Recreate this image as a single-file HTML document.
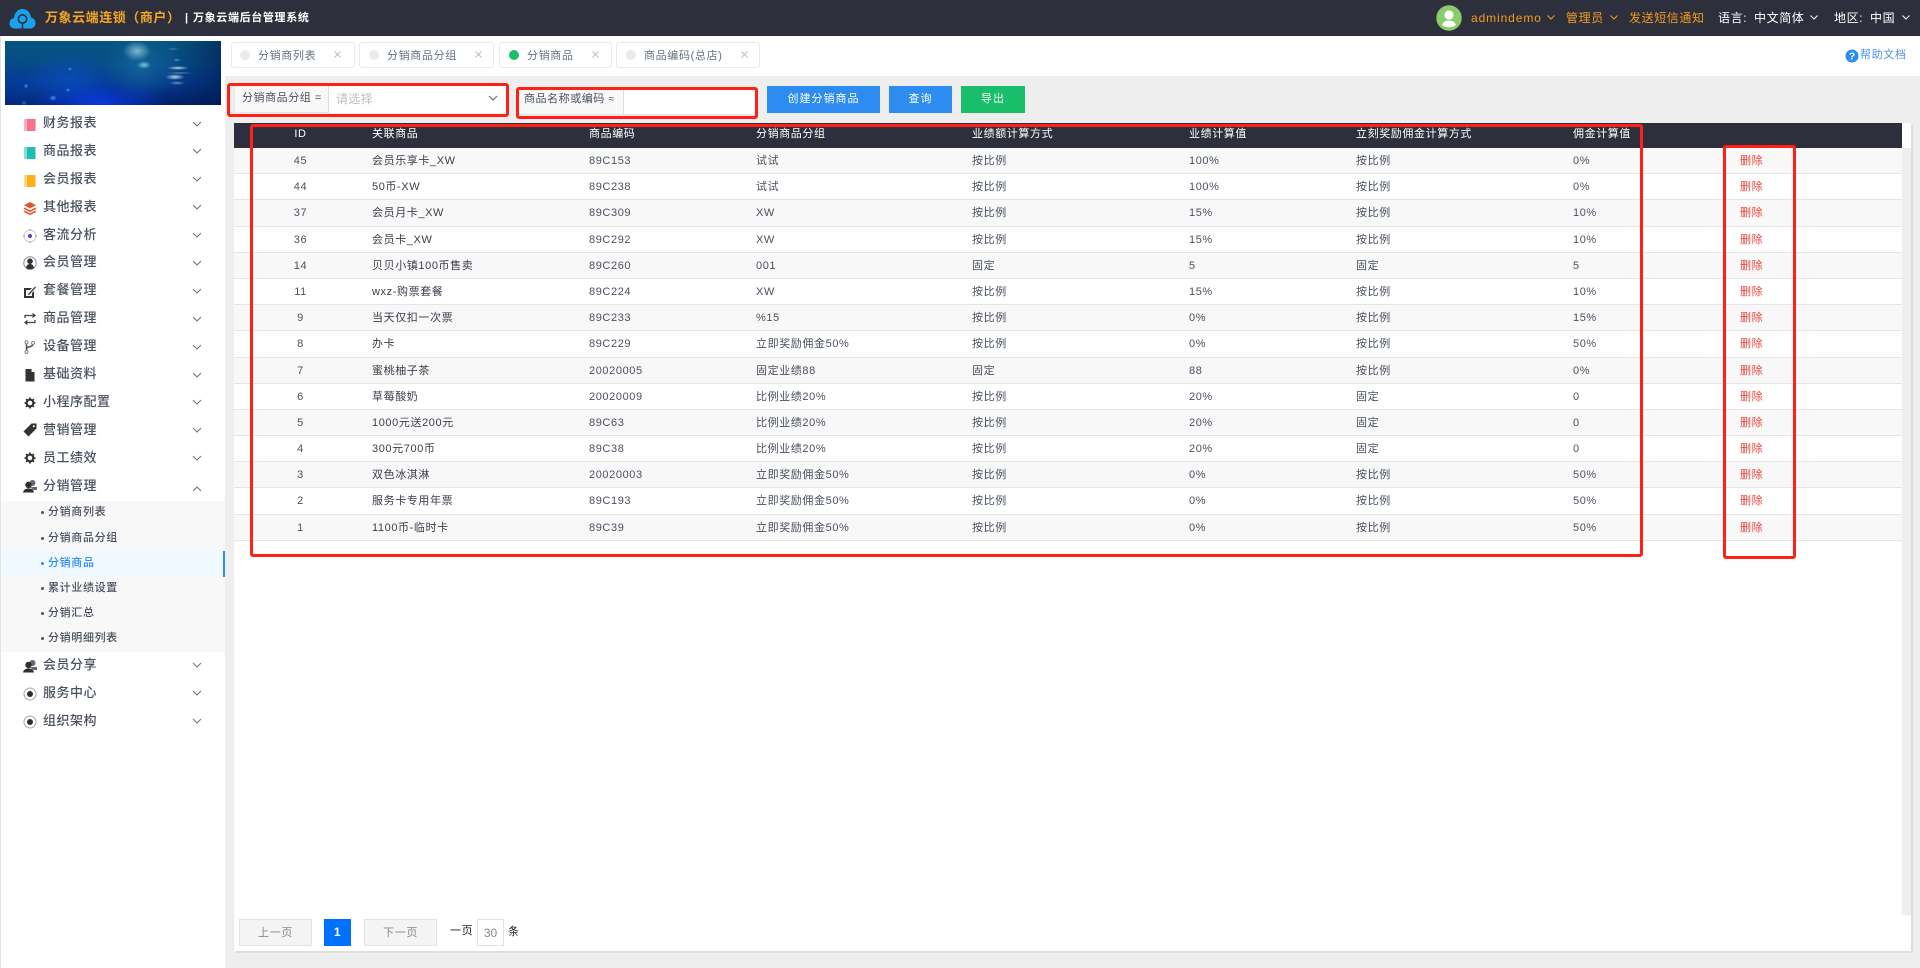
<!DOCTYPE html>
<html lang="zh-CN"><head><meta charset="utf-8"><title>分销商品</title>
<style>
*{box-sizing:border-box}
html,body{margin:0;padding:0;width:1920px;height:968px;overflow:hidden;background:#eee;font-family:"Liberation Sans","Noto Sans CJK SC",sans-serif;color:#495060}
.a{position:absolute;white-space:nowrap}
#top{position:absolute;left:0;top:0;width:1920px;height:36px;background:#2d303c}
#top .a{line-height:36px;top:0;height:36px}
.o{color:#f39c1f;font-size:12px;letter-spacing:.6px}
.w{color:#fff;font-size:12px;letter-spacing:.6px}
#side{position:absolute;left:0;top:36px;width:225px;height:932px;background:#fff;border-left:1px solid #e4e4e4}
#banner{position:absolute;left:5px;top:41px;width:216px;height:64px;background:
radial-gradient(ellipse 14px 10px at 132px 10px,rgba(170,225,235,.7),transparent),
radial-gradient(ellipse 7px 4px at 139px 24px,rgba(150,235,240,.75),transparent),
radial-gradient(ellipse 11px 2px at 173px 27px,rgba(225,245,245,.8),transparent),
radial-gradient(ellipse 10px 3px at 170px 36px,rgba(225,245,245,.8),transparent),
radial-gradient(ellipse 14px 1px at 175px 32px,rgba(200,240,240,.5),transparent),
radial-gradient(ellipse 8px 2px at 172px 42px,rgba(200,240,240,.5),transparent),
radial-gradient(ellipse 6px 1px at 168px 8px,rgba(180,230,230,.4),transparent),
radial-gradient(ellipse 4px 1.500px at 172px 19px,rgba(180,230,230,.5),transparent),
radial-gradient(ellipse 4px 3px at 48px 57px,rgba(60,170,255,.85),transparent),
radial-gradient(ellipse 2.500px 2px at 63px 49px,rgba(60,180,255,.8),transparent),
radial-gradient(ellipse 2.500px 2.500px at 21px 45px,rgba(60,170,255,.8),transparent),
radial-gradient(ellipse 2.500px 2px at 65px 28px,rgba(60,170,255,.7),transparent),
radial-gradient(ellipse 2.500px 2.500px at 19px 62px,rgba(60,170,255,.6),transparent),
radial-gradient(ellipse 70px 22px at 95px 62px,rgba(10,60,235,.9),transparent),
radial-gradient(ellipse 50px 28px at 65px 40px,rgba(12,80,200,.7),transparent),
radial-gradient(ellipse 45px 30px at 15px 48px,rgba(8,60,165,.6),transparent),
radial-gradient(ellipse 40px 34px at 135px 26px,rgba(25,115,165,.6),transparent),
linear-gradient(90deg,transparent 78%,rgba(0,25,75,.55) 100%),
linear-gradient(180deg,#06547f 0%,#074c86 35%,#043a8c 65%,#021f66 100%)}
.m{position:absolute;left:43px;font-size:13px;letter-spacing:.5px;line-height:20px;height:20px;font-weight:500;color:#495060;white-space:nowrap}
.ic{position:absolute;left:23px;width:14px;height:14px}
.ch{position:absolute;left:192px;width:10px;height:6px}
.s{position:absolute;left:48px;font-size:11px;letter-spacing:.65px;line-height:18px;font-weight:500;white-space:nowrap}
.d{position:absolute;left:41px;width:3px;height:3px;border-radius:50%;background:#495060}
#tabs{position:absolute;left:225px;top:36px;width:1695px;height:40px;background:#fff}
.tab{position:absolute;top:42px;height:26px;background:#fff;border:1px solid #e9eaec;border-radius:3px}
.dot{position:absolute;top:50px;width:10px;height:10px;border-radius:50%;background:#e8eaec}
.tt{position:absolute;top:47px;font-size:11px;letter-spacing:.65px;line-height:18px;color:#657180;white-space:nowrap}
.x{position:absolute;top:51px;width:7px;height:7px}
.btn{position:absolute;top:86px;height:27px;line-height:26px;text-align:center;color:#fff;font-size:11px;letter-spacing:1px}
.lab{position:absolute;background:#f8f8f9;border-left:1px solid #e5e5e5;border-right:1px solid #dddee1;border-bottom:1px solid #e5e5e5;font-size:11px;letter-spacing:.55px;color:#495060;white-space:nowrap}
.red{position:absolute;border:3px solid #ff2117;border-radius:3px}
#card{position:absolute;left:234px;top:123px;width:1677px;height:828px;background:#fff;box-shadow:2px 2px 0 #dedede}
#table{position:absolute;left:234px;top:123px;width:1668px;font-size:11px;letter-spacing:.6px}
.hd{display:flex;height:25px;background:#2d303c;color:#fff;line-height:23px}
.r{display:flex;height:26.2px;line-height:27px;border-bottom:1px solid #e5e5e5;background:#fff}
.r.g{background:#f8f8f8}
.c0{width:133px;text-align:center;flex:none;margin-right:5px}
.c1{width:217px;flex:none;color:#3a3e4a}.c2{width:167px;flex:none}.c3{width:216px;flex:none}.c4{width:217px;flex:none}.c5{width:167px;flex:none}.c6{width:217px;flex:none}.c7{width:167px;flex:none}
.hd .c1{color:#fff}
.c8{color:#ee4238;flex:none}
.pg{position:absolute;top:919px;height:27px;line-height:26px;text-align:center;font-size:11px;letter-spacing:.7px}
</style></head><body>

<div id="top">
<svg class="a" style="left:9px;top:8px;width:27px;height:21px" viewBox="0 0 27 21"><path d="M6 20.500C2.500 20.500 0.500 18 0.500 15.200 0.500 12.400 2.500 10.400 5 10 5.600 4.500 9 1 13.500 1 18 1 21.400 4.500 22 9.500 24.600 10 26.500 12.300 26.500 15 26.500 18 24.400 20.500 21 20.500Z" fill="#18a3ec"/><circle cx="13.500" cy="11" r="4.200" fill="none" stroke="#2d303c" stroke-width="1.600"/><path d="M13.500 15v5.500" stroke="#2d303c" stroke-width="1.600"/></svg>
<div class="a" style="left:45px;color:#f5a623;font-size:13px;font-weight:700;letter-spacing:.55px;width:135px">万象云端连锁（商户）</div>
<div class="a" style="left:185px;color:#fff;font-size:11px;font-weight:700">|</div>
<div class="a" style="left:193px;color:#fff;font-size:11px;font-weight:700;letter-spacing:.65px">万象云端后台管理系统</div>
<svg class="a" style="left:1436px;top:5px;width:26px;height:26px" viewBox="0 0 26 26"><circle cx="13" cy="13" r="12.700" fill="#8ccb6c"/><circle cx="13" cy="10" r="4.600" fill="#fff"/><path d="M6 20c1-3.400 4-4.400 7-4.400s6 1 7 4.400c-2 1.600-4.500 2.300-7 2.300s-5-.7-7-2.300z" fill="#fff"/></svg>
<div class="a o" style="left:1471px;font-size:12px;letter-spacing:.9px">admindemo</div>
<svg class="a" style="left:1547px;top:14px;height:7px;width:8px" viewBox="0 0 8 7"><path d="M.5 1.500 4 5l3.500-3.500" fill="none" stroke="#f39c1f" stroke-width="1"/></svg>
<div class="a o" style="left:1566px">管理员</div>
<svg class="a" style="left:1610px;top:14px;height:7px;width:8px" viewBox="0 0 8 7"><path d="M.5 1.500 4 5l3.500-3.500" fill="none" stroke="#f39c1f" stroke-width="1"/></svg>
<div class="a o" style="left:1629px">发送短信通知</div>
<div class="a w" style="left:1718px">语言:</div>
<div class="a w" style="left:1754px">中文简体</div>
<svg class="a" style="left:1810px;top:14px;height:7px;width:8px" viewBox="0 0 8 7"><path d="M.5 1.500 4 5l3.500-3.500" fill="none" stroke="#fff" stroke-width="1"/></svg>
<div class="a w" style="left:1834px">地区:</div>
<div class="a w" style="left:1870px">中国</div>
<svg class="a" style="left:1902px;top:14px;height:7px;width:8px" viewBox="0 0 8 7"><path d="M.5 1.500 4 5l3.500-3.500" fill="none" stroke="#fff" stroke-width="1"/></svg>
</div>

<div id="side"></div>
<div id="banner"></div>

<!-- sidebar icons -->
<svg class="ic" style="top:118px" viewBox="0 0 14 14"><rect x="1" y="1" width="12" height="12" fill="#f8708a"/><rect x="1" y="1" width="3" height="12" fill="#fbb0bd"/><rect x="12" y="1" width="1" height="12" fill="#fbb0bd"/></svg>
<svg class="ic" style="top:146px" viewBox="0 0 14 14"><rect x="1" y="1" width="12" height="12" fill="#1abfb0"/><rect x="1" y="1" width="3" height="12" fill="#8adcd4"/><rect x="12" y="1" width="1" height="12" fill="#8adcd4"/></svg>
<svg class="ic" style="top:174px" viewBox="0 0 14 14"><rect x="1" y="1" width="12" height="12" fill="#fcb018"/><rect x="1" y="1" width="3" height="12" fill="#fdd88a"/><rect x="12" y="1" width="1" height="12" fill="#fdd88a"/></svg>
<svg class="ic" style="top:201px" viewBox="0 0 14 14"><path d="M7 1 13 4.200 7 7.400 1 4.200Z" fill="#e2552c"/><path d="M1 7.200 7 10.200 13 7.200M1 10.200 7 13.200 13 10.200" fill="none" stroke="#e2552c" stroke-width="1.600"/></svg>
<svg class="ic" style="top:229px" viewBox="0 0 14 14"><circle cx="7" cy="7" r="6" fill="none" stroke="#c8c6dc" stroke-width="1"/><circle cx="7" cy="7" r="2" fill="#5a3fc0"/><path d="M7 0v2M7 12v2M0 7h2M12 7h2" stroke="#9c98c8" stroke-width="1"/></svg>
<svg class="ic" style="top:256px" viewBox="0 0 14 14"><circle cx="7" cy="7" r="6.200" fill="none" stroke="#8a8d96" stroke-width="1"/><circle cx="7" cy="5.200" r="2.800" fill="#333"/><path d="M3 12c.5-3 2-4 4-4s3.500 1 4 4c-1 1-2.500 1.500-4 1.500S4 13 3 12z" fill="#333"/></svg>
<svg class="ic" style="top:285px" viewBox="0 0 14 14"><path d="M1 3h8L7 5H3v6h6V8l2-2v7H1Z" fill="#333"/><path d="M5.500 8.500 12 1.500l1 1-6.500 7-2 .7Z" fill="#444"/></svg>
<svg class="ic" style="top:312px" viewBox="0 0 14 14"><path d="M2 6V3.500h9M9.500 1.500 12 3.500 9.500 5.500M12 8v2.500H3M4.500 8.500 2 10.500 4.500 12.500" fill="none" stroke="#444" stroke-width="1.300"/></svg>
<svg class="ic" style="top:340px" viewBox="0 0 14 14"><path d="M3.500 3v9M3.500 9c0-3 6.500-1.500 6.500-5" fill="none" stroke="#555" stroke-width="1.500"/><circle cx="3.500" cy="2.200" r="1.500" fill="#fff" stroke="#888"/><circle cx="3.500" cy="12" r="1.500" fill="#fff" stroke="#888"/><circle cx="10" cy="3" r="1.500" fill="#fff" stroke="#888"/></svg>
<svg class="ic" style="top:368px" viewBox="0 0 14 14"><path d="M2.500 1h6l3 3v9.500h-9Z" fill="#333"/><path d="M8.500 1v3h3Z" fill="#fff"/></svg>
<svg class="ic" style="top:396px" viewBox="-2 -2 18 18"><circle cx="7" cy="7" r="4.300" fill="none" stroke="#2f2f2f" stroke-width="2.600"/><path d="M7 0v3M7 11v3M0 7h3M11 7h3M2 2l2 2M10 10l2 2M12 2l-2 2M4 10l-2 2" stroke="#2f2f2f" stroke-width="2.200"/></svg>
<svg class="ic" style="top:423px" viewBox="0 0 14 14"><path d="M8.500 .5h5v5L5.500 13.500.5 8.500Z" fill="#333"/><circle cx="10.800" cy="3.200" r="1" fill="#fff"/></svg>
<svg class="ic" style="top:451px" viewBox="-2 -2 18 18"><circle cx="7" cy="7" r="4.300" fill="none" stroke="#2f2f2f" stroke-width="2.600"/><path d="M7 0v3M7 11v3M0 7h3M11 7h3M2 2l2 2M10 10l2 2M12 2l-2 2M4 10l-2 2" stroke="#2f2f2f" stroke-width="2.200"/></svg>
<svg class="ic" style="top:479px" viewBox="0 0 14 14"><circle cx="9.500" cy="4" r="3" fill="#667"/><path d="M7 8h7v3H10Z" fill="#667"/><circle cx="5.500" cy="6" r="3.200" fill="#2f2f2f"/><path d="M0 13.500c.5-2.800 2.500-4 5.500-4s5 1.200 5.500 4Z" fill="#2f2f2f"/></svg>
<svg class="ic" style="top:659px" viewBox="0 0 14 14"><circle cx="9.500" cy="4" r="3" fill="#667"/><path d="M7 8h7v3H10Z" fill="#667"/><circle cx="5.500" cy="6" r="3.200" fill="#2f2f2f"/><path d="M0 13.500c.5-2.800 2.500-4 5.500-4s5 1.200 5.500 4Z" fill="#2f2f2f"/></svg>
<svg class="ic" style="top:687px" viewBox="0 0 14 14"><circle cx="7" cy="7" r="6" fill="none" stroke="#aaa" stroke-width="1"/><circle cx="7" cy="7" r="3" fill="#2f2f2f"/></svg>
<svg class="ic" style="top:715px" viewBox="0 0 14 14"><circle cx="7" cy="7" r="6" fill="none" stroke="#aaa" stroke-width="1"/><circle cx="7" cy="7" r="3" fill="#2f2f2f"/></svg>

<!-- sidebar labels -->
<div class="m" style="top:113px">财务报表</div>
<div class="m" style="top:141px">商品报表</div>
<div class="m" style="top:169px">会员报表</div>
<div class="m" style="top:197px">其他报表</div>
<div class="m" style="top:225px">客流分析</div>
<div class="m" style="top:252px">会员管理</div>
<div class="m" style="top:280px">套餐管理</div>
<div class="m" style="top:308px">商品管理</div>
<div class="m" style="top:336px">设备管理</div>
<div class="m" style="top:364px">基础资料</div>
<div class="m" style="top:392px">小程序配置</div>
<div class="m" style="top:420px">营销管理</div>
<div class="m" style="top:448px">员工绩效</div>
<div class="m" style="top:476px">分销管理</div>
<div class="m" style="top:655px">会员分享</div>
<div class="m" style="top:683px">服务中心</div>
<div class="m" style="top:711px">组织架构</div>

<svg class="ch" style="top:121px" viewBox="0 0 10 6"><path d="M1 1l4 4 4-4" fill="none" stroke="#6b7280" stroke-width="1"/></svg>
<svg class="ch" style="top:148px" viewBox="0 0 10 6"><path d="M1 1l4 4 4-4" fill="none" stroke="#6b7280" stroke-width="1"/></svg>
<svg class="ch" style="top:176px" viewBox="0 0 10 6"><path d="M1 1l4 4 4-4" fill="none" stroke="#6b7280" stroke-width="1"/></svg>
<svg class="ch" style="top:204px" viewBox="0 0 10 6"><path d="M1 1l4 4 4-4" fill="none" stroke="#6b7280" stroke-width="1"/></svg>
<svg class="ch" style="top:232px" viewBox="0 0 10 6"><path d="M1 1l4 4 4-4" fill="none" stroke="#6b7280" stroke-width="1"/></svg>
<svg class="ch" style="top:260px" viewBox="0 0 10 6"><path d="M1 1l4 4 4-4" fill="none" stroke="#6b7280" stroke-width="1"/></svg>
<svg class="ch" style="top:288px" viewBox="0 0 10 6"><path d="M1 1l4 4 4-4" fill="none" stroke="#6b7280" stroke-width="1"/></svg>
<svg class="ch" style="top:316px" viewBox="0 0 10 6"><path d="M1 1l4 4 4-4" fill="none" stroke="#6b7280" stroke-width="1"/></svg>
<svg class="ch" style="top:344px" viewBox="0 0 10 6"><path d="M1 1l4 4 4-4" fill="none" stroke="#6b7280" stroke-width="1"/></svg>
<svg class="ch" style="top:372px" viewBox="0 0 10 6"><path d="M1 1l4 4 4-4" fill="none" stroke="#6b7280" stroke-width="1"/></svg>
<svg class="ch" style="top:399px" viewBox="0 0 10 6"><path d="M1 1l4 4 4-4" fill="none" stroke="#6b7280" stroke-width="1"/></svg>
<svg class="ch" style="top:427px" viewBox="0 0 10 6"><path d="M1 1l4 4 4-4" fill="none" stroke="#6b7280" stroke-width="1"/></svg>
<svg class="ch" style="top:455px" viewBox="0 0 10 6"><path d="M1 1l4 4 4-4" fill="none" stroke="#6b7280" stroke-width="1"/></svg>
<svg class="ch" style="top:486px" viewBox="0 0 10 6"><path d="M1 5l4-4 4 4" fill="none" stroke="#6b7280" stroke-width="1"/></svg>
<svg class="ch" style="top:662px" viewBox="0 0 10 6"><path d="M1 1l4 4 4-4" fill="none" stroke="#6b7280" stroke-width="1"/></svg>
<svg class="ch" style="top:690px" viewBox="0 0 10 6"><path d="M1 1l4 4 4-4" fill="none" stroke="#6b7280" stroke-width="1"/></svg>
<svg class="ch" style="top:718px" viewBox="0 0 10 6"><path d="M1 1l4 4 4-4" fill="none" stroke="#6b7280" stroke-width="1"/></svg>

<!-- submenu -->
<div class="a" style="left:1px;top:501px;width:224px;height:151px;background:#f8f8f8"></div>
<div class="a" style="left:1px;top:551px;width:224px;height:26px;background:#f0f9ff"></div>
<div class="a" style="left:223px;top:551px;width:2px;height:26px;background:#2d8cf0"></div>
<div class="d" style="top:511px"></div><div class="s" style="top:503px">分销商列表</div>
<div class="d" style="top:537px"></div><div class="s" style="top:529px">分销商品分组</div>
<div class="d" style="top:562px;background:#2d8cf0"></div><div class="s" style="top:554px;color:#2d8cf0">分销商品</div>
<div class="d" style="top:587px"></div><div class="s" style="top:579px">累计业绩设置</div>
<div class="d" style="top:612px"></div><div class="s" style="top:604px">分销汇总</div>
<div class="d" style="top:637px"></div><div class="s" style="top:629px">分销明细列表</div>

<!-- tabs -->
<div id="tabs"></div>
<div class="tab" style="left:231px;width:124px"></div>
<div class="tab" style="left:359px;width:135px"></div>
<div class="tab" style="left:499px;width:113px"></div>
<div class="tab" style="left:616px;width:144px"></div>
<div class="dot" style="left:240px"></div><div class="tt" style="left:258px">分销商列表</div><svg class="x" style="left:334px" viewBox="0 0 7 7"><path d="M.5.5l6 6M6.500.5l-6 6" stroke="#b4b8c0" stroke-width=".9"/></svg>
<div class="dot" style="left:369px"></div><div class="tt" style="left:387px">分销商品分组</div><svg class="x" style="left:475px" viewBox="0 0 7 7"><path d="M.5.5l6 6M6.500.5l-6 6" stroke="#b4b8c0" stroke-width=".9"/></svg>
<div class="dot" style="left:509px;background:#19be6b"></div><div class="tt" style="left:527px">分销商品</div><svg class="x" style="left:592px" viewBox="0 0 7 7"><path d="M.5.5l6 6M6.500.5l-6 6" stroke="#b4b8c0" stroke-width=".9"/></svg>
<div class="dot" style="left:626px"></div><div class="tt" style="left:644px">商品编码(总店)</div><svg class="x" style="left:741px" viewBox="0 0 7 7"><path d="M.5.5l6 6M6.500.5l-6 6" stroke="#b4b8c0" stroke-width=".9"/></svg>
<div class="a" style="left:1860px;top:46px;font-size:11px;letter-spacing:.65px;line-height:18px;color:#4a94ee">帮助文档</div>
<svg class="a" style="left:1845px;top:49px;width:14px;height:14px" viewBox="0 0 14 14"><circle cx="7" cy="7" r="6.500" fill="#2d8cf0"/><text x="7" y="10.500" font-size="10" font-weight="700" text-anchor="middle" fill="#fff" font-family="Liberation Sans">?</text></svg>

<!-- filters -->
<div class="a" style="left:234px;top:86px;width:272px;height:27px;background:#fff"></div>
<div class="lab" style="left:234px;top:86px;width:95px;height:27px;line-height:25px;padding-left:7px">分销商品分组 =</div>
<div class="a" style="left:336px;top:89px;font-size:12px;line-height:20px;color:#bbbec4;letter-spacing:.3px">请选择</div>
<svg class="a" style="left:488px;top:95px;width:10px;height:7px" viewBox="0 0 10 7"><path d="M1 1l4 4 4-4" fill="none" stroke="#6b7280" stroke-width="1.200"/></svg>
<div class="a" style="left:518px;top:89px;width:238px;height:26px;background:#fff;border-bottom:1px solid #e5e5e5"></div>
<div class="lab" style="left:518px;top:89px;width:106px;height:26px;line-height:20px;padding-left:6px;border-left:0">商品名称或编码 <span style="font-size:10px">≈</span></div>
<div class="btn" style="left:767px;width:113px;background:#2d8cf0">创建分销商品</div>
<div class="btn" style="left:889px;width:63px;background:#2d8cf0">查询</div>
<div class="btn" style="left:961px;width:64px;background:#19be6b">导出</div>

<!-- card -->
<div id="card"></div>
<div class="a" style="left:1902px;top:148px;width:9px;height:767px;background:#eee"></div>
<div id="table">
<div class="hd"><span class="c0">ID</span><span class="c1">关联商品</span><span class="c2">商品编码</span><span class="c3">分销商品分组</span><span class="c4">业绩额计算方式</span><span class="c5">业绩计算值</span><span class="c6">立刻奖励佣金计算方式</span><span class="c7">佣金计算值</span></div>
<div class="r g"><span class="c0">45</span><span class="c1">会员乐享卡_XW</span><span class="c2">89C153</span><span class="c3">试试</span><span class="c4">按比例</span><span class="c5">100%</span><span class="c6">按比例</span><span class="c7">0%</span><span class="c8">删除</span></div>
<div class="r"><span class="c0">44</span><span class="c1">50币-XW</span><span class="c2">89C238</span><span class="c3">试试</span><span class="c4">按比例</span><span class="c5">100%</span><span class="c6">按比例</span><span class="c7">0%</span><span class="c8">删除</span></div>
<div class="r g"><span class="c0">37</span><span class="c1">会员月卡_XW</span><span class="c2">89C309</span><span class="c3">XW</span><span class="c4">按比例</span><span class="c5">15%</span><span class="c6">按比例</span><span class="c7">10%</span><span class="c8">删除</span></div>
<div class="r"><span class="c0">36</span><span class="c1">会员卡_XW</span><span class="c2">89C292</span><span class="c3">XW</span><span class="c4">按比例</span><span class="c5">15%</span><span class="c6">按比例</span><span class="c7">10%</span><span class="c8">删除</span></div>
<div class="r g"><span class="c0">14</span><span class="c1">贝贝小镇100币售卖</span><span class="c2">89C260</span><span class="c3">001</span><span class="c4">固定</span><span class="c5">5</span><span class="c6">固定</span><span class="c7">5</span><span class="c8">删除</span></div>
<div class="r"><span class="c0">11</span><span class="c1">wxz-购票套餐</span><span class="c2">89C224</span><span class="c3">XW</span><span class="c4">按比例</span><span class="c5">15%</span><span class="c6">按比例</span><span class="c7">10%</span><span class="c8">删除</span></div>
<div class="r g"><span class="c0">9</span><span class="c1">当天仅扣一次票</span><span class="c2">89C233</span><span class="c3">%15</span><span class="c4">按比例</span><span class="c5">0%</span><span class="c6">按比例</span><span class="c7">15%</span><span class="c8">删除</span></div>
<div class="r"><span class="c0">8</span><span class="c1">办卡</span><span class="c2">89C229</span><span class="c3">立即奖励佣金50%</span><span class="c4">按比例</span><span class="c5">0%</span><span class="c6">按比例</span><span class="c7">50%</span><span class="c8">删除</span></div>
<div class="r g"><span class="c0">7</span><span class="c1">蜜桃柚子茶</span><span class="c2">20020005</span><span class="c3">固定业绩88</span><span class="c4">固定</span><span class="c5">88</span><span class="c6">按比例</span><span class="c7">0%</span><span class="c8">删除</span></div>
<div class="r"><span class="c0">6</span><span class="c1">草莓酸奶</span><span class="c2">20020009</span><span class="c3">比例业绩20%</span><span class="c4">按比例</span><span class="c5">20%</span><span class="c6">固定</span><span class="c7">0</span><span class="c8">删除</span></div>
<div class="r g"><span class="c0">5</span><span class="c1">1000元送200元</span><span class="c2">89C63</span><span class="c3">比例业绩20%</span><span class="c4">按比例</span><span class="c5">20%</span><span class="c6">固定</span><span class="c7">0</span><span class="c8">删除</span></div>
<div class="r"><span class="c0">4</span><span class="c1">300元700币</span><span class="c2">89C38</span><span class="c3">比例业绩20%</span><span class="c4">按比例</span><span class="c5">20%</span><span class="c6">固定</span><span class="c7">0</span><span class="c8">删除</span></div>
<div class="r g"><span class="c0">3</span><span class="c1">双色冰淇淋</span><span class="c2">20020003</span><span class="c3">立即奖励佣金50%</span><span class="c4">按比例</span><span class="c5">0%</span><span class="c6">按比例</span><span class="c7">50%</span><span class="c8">删除</span></div>
<div class="r"><span class="c0">2</span><span class="c1">服务卡专用年票</span><span class="c2">89C193</span><span class="c3">立即奖励佣金50%</span><span class="c4">按比例</span><span class="c5">0%</span><span class="c6">按比例</span><span class="c7">50%</span><span class="c8">删除</span></div>
<div class="r g"><span class="c0">1</span><span class="c1">1100币-临时卡</span><span class="c2">89C39</span><span class="c3">立即奖励佣金50%</span><span class="c4">按比例</span><span class="c5">0%</span><span class="c6">按比例</span><span class="c7">50%</span><span class="c8">删除</span></div>
</div>

<!-- pagination -->
<div class="pg" style="left:239px;width:73px;background:#f4f4f4;border:1px solid #e3e3e3;color:#888">上一页</div>
<div class="pg" style="left:324px;width:27px;background:#0070ff;color:#fff;font-weight:700;font-size:12px">1</div>
<div class="pg" style="left:364px;width:73px;background:#f4f4f4;border:1px solid #e3e3e3;color:#888">下一页</div>
<div class="a" style="left:450px;top:922px;font-size:11px;line-height:18px;color:#222;letter-spacing:.6px">一页</div>
<div class="pg" style="left:477px;width:27px;background:#fff;border:1px solid #e3e3e3;color:#888;letter-spacing:0;font-size:12px">30</div>
<div class="a" style="left:508px;top:923px;font-size:11px;line-height:18px;color:#222">条</div>

<!-- annotations -->
<div class="red" style="left:227px;top:83px;width:282px;height:34px"></div>
<div class="red" style="left:516px;top:87px;width:242px;height:32px"></div>
<div class="red" style="left:250px;top:124px;width:1393px;height:433px"></div>
<div class="red" style="left:1723px;top:145px;width:73px;height:414px"></div>
</body></html>
